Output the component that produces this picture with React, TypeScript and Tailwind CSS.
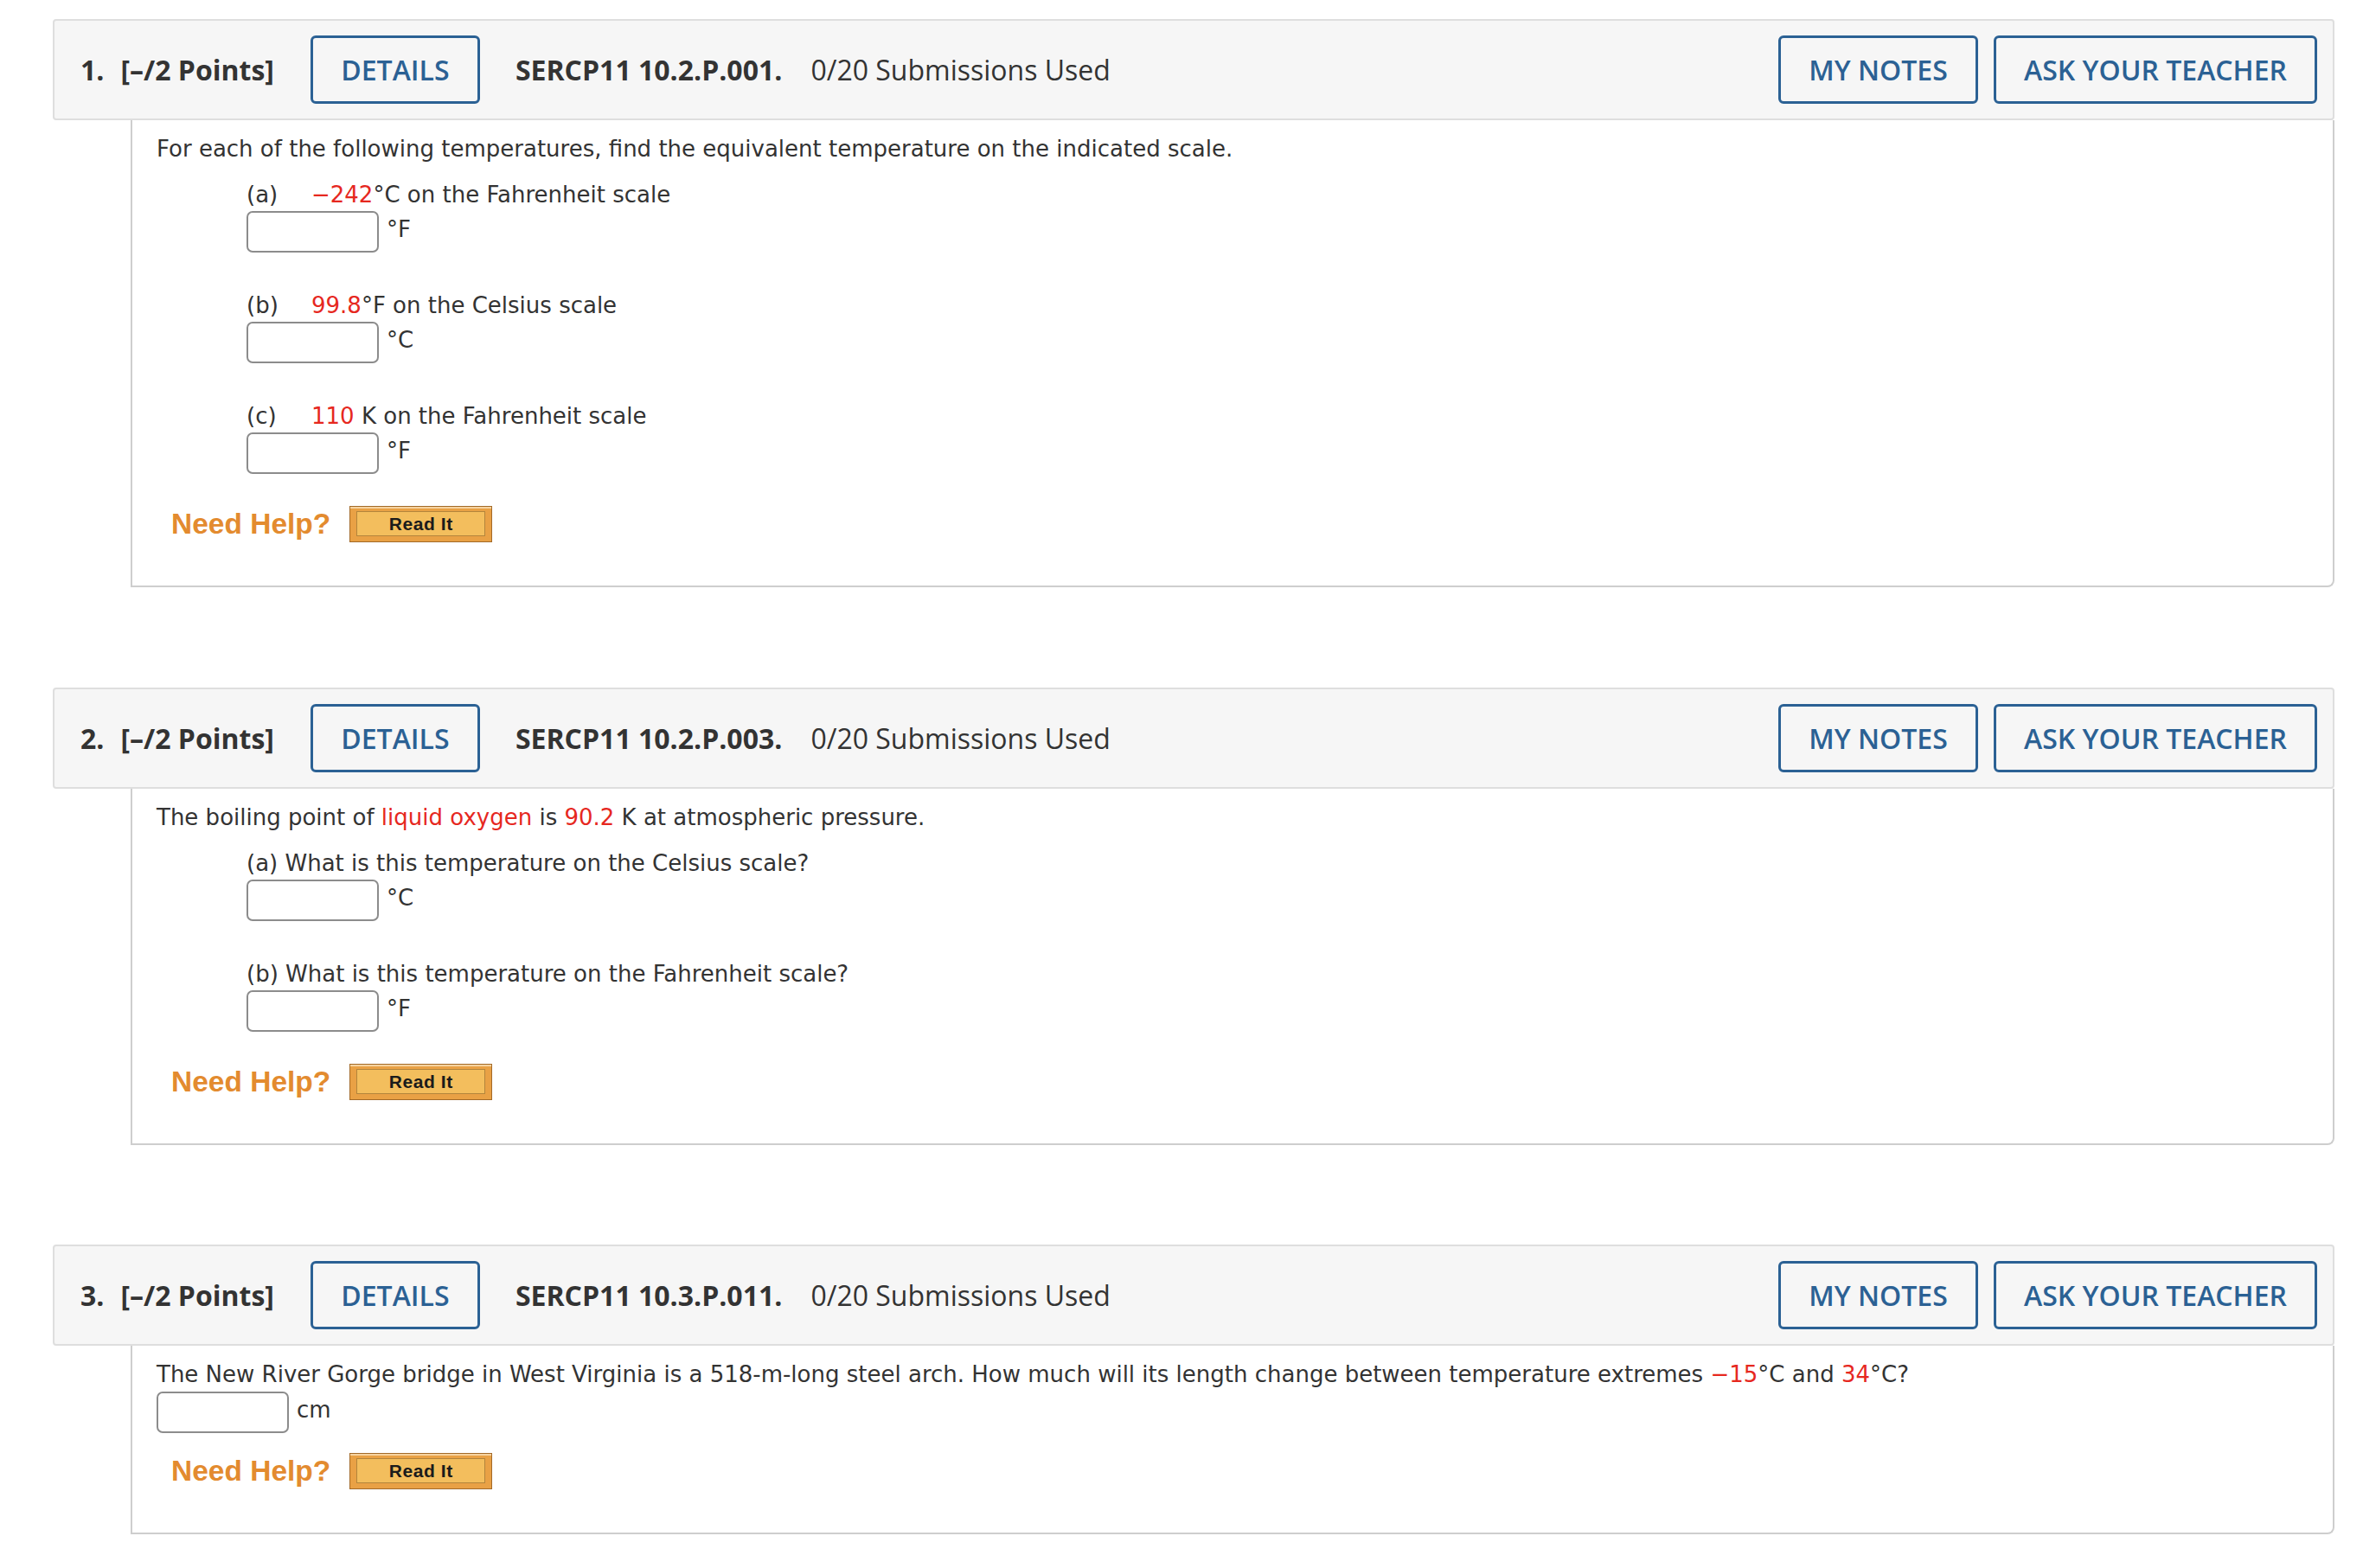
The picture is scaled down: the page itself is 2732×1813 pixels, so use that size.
import React from "react";

const R = ({ children }: { children: React.ReactNode }) => (
  <span className="text-[#e6281f]">{children}</span>
);

function Header({ num, code }: { num: string; code: string }) {
  return (
    <div className="flex items-center h-[117px] bg-[#f6f6f6] border-2 border-[#dedede] rounded-[4px] pl-[30px] pr-[18px] text-[32px] text-[#333333] [font-family:'Open_Sans',sans-serif]">
      <span className="font-bold">{num}</span>
      <span className="font-bold ml-[19px]">[–/2 Points]</span>
      <button className="ml-[42px] w-[196px] h-[79px] border-[3px] border-[#2b6194] rounded-[6px] text-[#2b6194] text-[32px] font-semibold leading-none">
        DETAILS
      </button>
      <span className="font-bold ml-[41px]">{code}</span>
      <span className="ml-[33px]">0/20 Submissions Used</span>
      <div className="ml-auto flex gap-[18px]">
        <button className="w-[231px] h-[79px] border-[3px] border-[#2b6194] rounded-[6px] text-[#2b6194] text-[32px] font-semibold leading-none">
          MY NOTES
        </button>
        <button className="w-[374px] h-[79px] border-[3px] border-[#2b6194] rounded-[6px] text-[#2b6194] text-[32px] font-semibold leading-none">
          ASK YOUR TEACHER
        </button>
      </div>
    </div>
  );
}

function Input() {
  return (
    <div className="w-[153px] h-[48px] border-2 border-[#8c8c8c] rounded-[7px] bg-white shrink-0" />
  );
}

function Answer({ unit, mt = "mt-[4px]" }: { unit: string; mt?: string }) {
  return (
    <div className={`flex items-start ${mt}`}>
      <Input />
      <span className="ml-[9px] mt-[6px] leading-[30px]">{unit}</span>
    </div>
  );
}

function NeedHelp({ mt }: { mt: string }) {
  return (
    <div className={`flex items-center ${mt} ml-[17px] [font-family:'Liberation_Sans',Arial,sans-serif]`}>
      <span className="text-[33.5px] font-bold text-[#e38b2f] leading-none">Need Help?</span>
      <div className="ml-[22px] w-[165px] h-[42px] border border-[#a36a28] bg-[#e9a145] shadow-[inset_0_2px_0_#f6d3a0] flex items-center justify-center p-[5px_7px_6px_7px]">
        <div className="w-full h-full border border-[#b3853c] bg-[#f3be5d] flex items-center justify-center">
          <span className="text-[21px] font-bold text-[#1b1b1b] tracking-[0.6px] leading-none">Read It</span>
        </div>
      </div>
    </div>
  );
}

function Body({ children }: { children: React.ReactNode }) {
  return (
    <div className="ml-[90px] border-2 border-t-0 border-[#cecece] rounded-br-[8px] pl-[28px] pt-[18px] pb-[50px] text-[26px] leading-[30px] text-[#333333] [font-family:'DejaVu_Sans',Verdana,sans-serif]">
      {children}
    </div>
  );
}

function Item({ label, children, unit, first }: { label: string; children: React.ReactNode; unit: string; first?: boolean }) {
  return (
    <div className={`ml-[104px] ${first ? "mt-[23px]" : "mt-[46px]"}`}>
      <div className="flex">
        <span className="w-[75px] shrink-0">{label}</span>
        <span>{children}</span>
      </div>
      <Answer unit={unit} />
    </div>
  );
}

export default function App() {
  return (
    <div className="min-h-[1813px] bg-white pl-[61px] pr-[33px] pt-[22px]">
      <Header num="1." code="SERCP11 10.2.P.001." />
      <Body>
        <p>For each of the following temperatures, find the equivalent temperature on the indicated scale.</p>
        <Item label="(a)" unit="°F" first>
          <R>−242</R>°C on the Fahrenheit scale
        </Item>
        <Item label="(b)" unit="°C">
          <R>99.8</R>°F on the Celsius scale
        </Item>
        <Item label="(c)" unit="°F">
          <R>110</R> K on the Fahrenheit scale
        </Item>
        <NeedHelp mt="mt-[37px]" />
      </Body>

      <div className="mt-[116px]">
        <Header num="2." code="SERCP11 10.2.P.003." />
        <Body>
          <p>
            The boiling point of <R>liquid oxygen</R> is <R>90.2</R> K at atmospheric pressure.
          </p>
          <div className="ml-[104px] mt-[23px]">
            <p>(a) What is this temperature on the Celsius scale?</p>
            <Answer unit="°C" />
          </div>
          <div className="ml-[104px] mt-[46px]">
            <p>(b) What is this temperature on the Fahrenheit scale?</p>
            <Answer unit="°F" />
          </div>
          <NeedHelp mt="mt-[37px]" />
        </Body>
      </div>

      <div className="mt-[115px]">
        <Header num="3." code="SERCP11 10.3.P.011." />
        <Body>
          <p>
            The New River Gorge bridge in West Virginia is a 518-m-long steel arch. How much will its length change between temperature extremes <R>−15</R>°C and <R>34</R>°C?
          </p>
          <Answer unit="cm" mt="mt-[5px]" />
          <NeedHelp mt="mt-[23px]" />
        </Body>
      </div>
    </div>
  );
}
